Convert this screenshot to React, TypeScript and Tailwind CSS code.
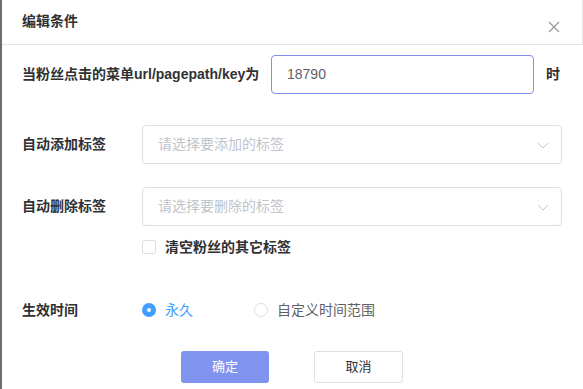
import React, { useState } from 'react';

const font = { fontFamily: '"Liberation Sans", "Noto Sans CJK SC", sans-serif' };

const Chevron: React.FC = () => (
  <svg width="12" height="12" viewBox="0 0 12 12" fill="none" className="shrink-0">
    <path d="M1 4l5 5 5-5" stroke="#c0c4cc" strokeWidth="1" />
  </svg>
);

const SelectBox: React.FC<{ placeholder: string }> = ({ placeholder }) => (
  <div className="flex h-[39px] w-[420px] items-center justify-between rounded-[4px] border border-[#dcdfe6] bg-white pl-[15px] pr-[12px]">
    <span className="text-[14px] text-[#c0c4cc]">{placeholder}</span>
    <Chevron />
  </div>
);

export default function App() {
  const [forever, setForever] = useState(true);
  const [clearOthers, setClearOthers] = useState(false);

  return (
    <div className="h-[389px] w-[583px] overflow-hidden border-l-2 border-[#6d6d70] bg-white" style={font}>
      <div className="flex h-[45px] items-start justify-between border-b border-r border-[#e4e4e4] pl-[20px] pr-[22px]">
        <h2 className="mt-[11px] text-[14px] font-bold leading-[20px] text-[#303133]">编辑条件</h2>
        <svg width="12" height="12" viewBox="0 0 12 12" className="mt-[21px]">
          <path d="M1 1l10 10M11 1L1 11" stroke="#909399" strokeWidth="1.1" />
        </svg>
      </div>

      <div className="pl-[20px]">
        <div className="mt-[10px] flex items-center">
          <span className="w-[249px] text-[14px] font-bold text-[#303133]">当粉丝点击的菜单url/pagepath/key为</span>
          <div className="flex h-[39px] w-[263px] items-center rounded-[4px] border border-[#7f90ee] px-[15px] text-[14px] text-[#606266]">
            18790
          </div>
          <span className="ml-[12px] text-[14px] font-bold text-[#303133]">时</span>
        </div>

        <div className="mt-[31px] flex items-center">
          <span className="w-[120px] text-[14px] font-bold text-[#303133]">自动添加标签</span>
          <SelectBox placeholder="请选择要添加的标签" />
        </div>

        <div className="mt-[23px] flex items-center">
          <span className="w-[120px] text-[14px] font-bold text-[#303133]">自动删除标签</span>
          <SelectBox placeholder="请选择要删除的标签" />
        </div>

        <div className="ml-[120px] mt-[11px] flex h-[20px] items-center">
          <button
            onClick={() => setClearOthers(!clearOthers)}
            className="h-[14px] w-[14px] rounded-[2px] border border-[#dcdfe6] bg-white"
          />
          <span className="ml-[9px] text-[14px] font-bold text-[#303133]">清空粉丝的其它标签</span>
        </div>

        <div className="mt-[43px] flex h-[20px] items-center">
          <span className="w-[120px] text-[14px] font-bold text-[#303133]">生效时间</span>
          <button onClick={() => setForever(true)} className="flex items-center">
            <span
              className={
                forever
                  ? 'flex h-[14px] w-[14px] items-center justify-center rounded-full bg-[#409eff]'
                  : 'h-[14px] w-[14px] rounded-full border border-[#dcdfe6]'
              }
            >
              {forever && <span className="h-[4px] w-[4px] rounded-full bg-white" />}
            </span>
            <span className={`ml-[9px] text-[14px] ${forever ? 'text-[#409eff]' : 'text-[#606266]'}`}>永久</span>
          </button>
          <button onClick={() => setForever(false)} className="ml-[61px] flex items-center">
            <span
              className={
                !forever
                  ? 'flex h-[14px] w-[14px] items-center justify-center rounded-full bg-[#409eff]'
                  : 'h-[14px] w-[14px] rounded-full border border-[#dcdfe6]'
              }
            >
              {!forever && <span className="h-[4px] w-[4px] rounded-full bg-white" />}
            </span>
            <span className={`ml-[9px] text-[14px] ${!forever ? 'text-[#409eff]' : 'text-[#606266]'}`}>自定义时间范围</span>
          </button>
        </div>

        <div className="ml-[159px] mt-[31px] flex gap-[45px]">
          <button className="h-[32px] w-[88px] rounded-[3px] bg-[#8093ef] text-[13px] text-white">确定</button>
          <button className="h-[32px] w-[89px] rounded-[3px] border border-[#dcdfe6] bg-white text-[13px] text-[#303133]">
            取消
          </button>
        </div>
      </div>
    </div>
  );
}
